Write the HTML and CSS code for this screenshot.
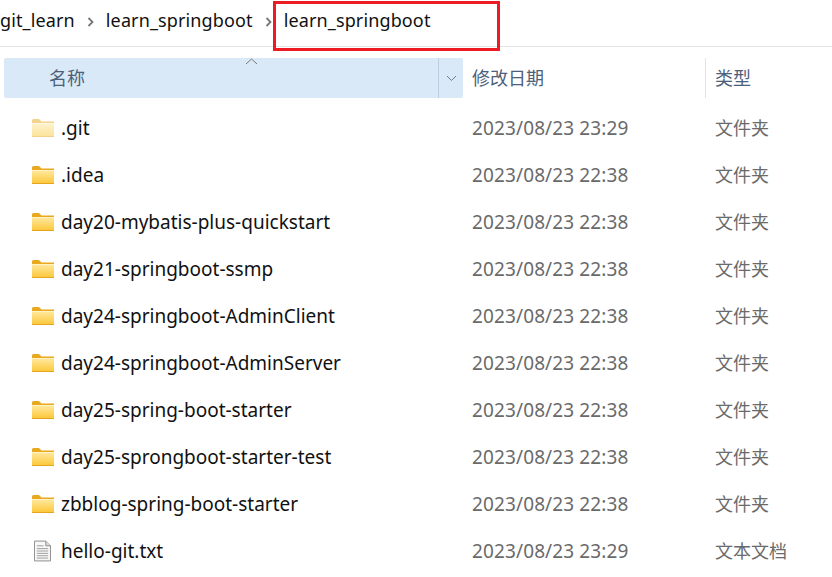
FILE: index.html
```html
<!DOCTYPE html>
<html lang="zh">
<head>
<meta charset="utf-8">
<title>learn_springboot</title>
<link rel="stylesheet" href="styles.css">
</head>
<body>
<svg class="defs" width="0" height="0" aria-hidden="true">
  <defs>
    <linearGradient id="fg" x1="0" y1="0" x2="0" y2="1"><stop offset="0" stop-color="#ffe9a0"/><stop offset="1" stop-color="#fcc93e"/></linearGradient>
    <symbol id="folder" viewBox="0 0 22 18">
      <path d="M0 1.5Q0 0 1.5 0H7L9.5 2.5H22V4H0Z" fill="#e8a81f"/>
      <path d="M0 4H22V17H0Z" fill="url(#fg)"/>
      <path d="M0 17H22V18H0Z" fill="#e5a51e"/>
      <path d="M0 4H22V5H0Z" fill="#fff2c4"/>
    </symbol>
  </defs>
</svg>
<nav class="crumbs">
  <span class="crumb">git_learn</span>
  <svg class="sep" viewBox="0 0 8 12"><path d="M1.5 2L5.5 6L1.5 10" fill="none" stroke="#777" stroke-width="1.8"/></svg>
  <span class="crumb">learn_springboot</span>
  <svg class="sep" viewBox="0 0 8 12"><path d="M1.5 2L5.5 6L1.5 10" fill="none" stroke="#777" stroke-width="1.8"/></svg>
  <span class="crumb">learn_springboot</span>
</nav>
<div class="redbox"></div>
<header class="head">
  <div class="h-name">
    <span class="h-label">名称</span>
    <svg class="sort" viewBox="0 0 13 7"><path d="M1 6L6.5 1L12 6" fill="none" stroke="#7a7a7a" stroke-width="1"/></svg>
    <span class="h-drop"><svg viewBox="0 0 11 7" width="11" height="7"><path d="M1 1L5.5 5.5L10 1" fill="none" stroke="#6b7f92" stroke-width="1"/></svg></span>
  </div>
  <div class="h-date">修改日期</div>
  <div class="h-type">类型</div>
</header>
<main class="list">
  <div class="row"><span class="ic"><svg class="fold ghost"><use href="#folder"/></svg></span><span class="name">.git</span><span class="date">2023/08/23 23:29</span><span class="type">文件夹</span></div>
  <div class="row"><span class="ic"><svg class="fold"><use href="#folder"/></svg></span><span class="name">.idea</span><span class="date">2023/08/23 22:38</span><span class="type">文件夹</span></div>
  <div class="row"><span class="ic"><svg class="fold"><use href="#folder"/></svg></span><span class="name">day20-mybatis-plus-quickstart</span><span class="date">2023/08/23 22:38</span><span class="type">文件夹</span></div>
  <div class="row"><span class="ic"><svg class="fold"><use href="#folder"/></svg></span><span class="name">day21-springboot-ssmp</span><span class="date">2023/08/23 22:38</span><span class="type">文件夹</span></div>
  <div class="row"><span class="ic"><svg class="fold"><use href="#folder"/></svg></span><span class="name">day24-springboot-AdminClient</span><span class="date">2023/08/23 22:38</span><span class="type">文件夹</span></div>
  <div class="row"><span class="ic"><svg class="fold"><use href="#folder"/></svg></span><span class="name">day24-springboot-AdminServer</span><span class="date">2023/08/23 22:38</span><span class="type">文件夹</span></div>
  <div class="row"><span class="ic"><svg class="fold"><use href="#folder"/></svg></span><span class="name">day25-spring-boot-starter</span><span class="date">2023/08/23 22:38</span><span class="type">文件夹</span></div>
  <div class="row"><span class="ic"><svg class="fold"><use href="#folder"/></svg></span><span class="name">day25-sprongboot-starter-test</span><span class="date">2023/08/23 22:38</span><span class="type">文件夹</span></div>
  <div class="row"><span class="ic"><svg class="fold"><use href="#folder"/></svg></span><span class="name">zbblog-spring-boot-starter</span><span class="date">2023/08/23 22:38</span><span class="type">文件夹</span></div>
  <div class="row"><span class="ic"><svg class="txt" viewBox="0 0 18 22"><path d="M.5.5H12.5L17.5 5.5V21.5H.5Z" fill="#f7f7f7" stroke="#8a8a8a"/><path d="M12.5.5V5.5H17.5" fill="#dcdcdc" stroke="#8a8a8a"/><path d="M3 5.5H10M3 8.5H15M3 11H15M3 13.5H15M3 16H15M3 18.5H15" stroke="#9a9a9a" stroke-width="1"/></svg></span><span class="name">hello-git.txt</span><span class="date">2023/08/23 23:29</span><span class="type">文本文档</span></div>
</main>
</body>
</html>
```
FILE: styles.css
```css
* { box-sizing: border-box; }
html, body { margin: 0; height: 577px; overflow: hidden; background: #fff; }
body {
  position: relative;
  font-family: "Noto Sans", "Noto Sans CJK SC", sans-serif;
  font-size: 18px;
  color: #111;
}
.defs { position: absolute; }
.crumbs {
  height: 47px;
  border-bottom: 1px solid #e2e2e2;
  display: flex;
  align-items: flex-start;
  padding-top: 6px;
  line-height: 28px;
  white-space: nowrap;
  letter-spacing: .13px;
}
.sep { width: 8px; height: 12px; margin: 10px 11px 0 12px; flex: none; }
.redbox {
  position: absolute;
  left: 273px; top: 1px;
  width: 227px; height: 50px;
  border: 3px solid #ed1c24;
}
.head {
  display: flex;
  height: 40px;
  margin: 11px 0 0 4px;
  line-height: 40px;
  color: #4c607a;
}
.h-name {
  position: relative;
  width: 459px;
  background: #d9e9f7;
  border-radius: 2px;
  padding-left: 45px;
}
.sort { position: absolute; left: 241px; top: 0; width: 13px; height: 7px; }
.h-drop {
  position: absolute;
  right: 0; top: 0; bottom: 0;
  width: 25px;
  border-left: 1px solid #bccfe0;
  display: flex;
  align-items: center;
  justify-content: center;
}
.h-date { width: 242px; padding-left: 9px; }
.h-type { padding-left: 9px; border-left: 1px solid #e3e3e3; flex: 1; }
.list { padding-top: 6px; }
.row {
  display: flex;
  align-items: center;
  height: 47px;
  white-space: nowrap;
}
.ic { width: 61px; padding-left: 32px; display: flex; flex: none; }
.fold { width: 22px; height: 18px; }
.ghost { opacity: .5; }
.txt { width: 17px; height: 22px; margin-left: 2px; }
.name { width: 411px; flex: none; font-size: 19px; }
.date { width: 243px; flex: none; color: #6a6a6a; font-size: 19px; letter-spacing: .12px; }
.type { color: #6a6a6a; margin-bottom: 2px; }
```
